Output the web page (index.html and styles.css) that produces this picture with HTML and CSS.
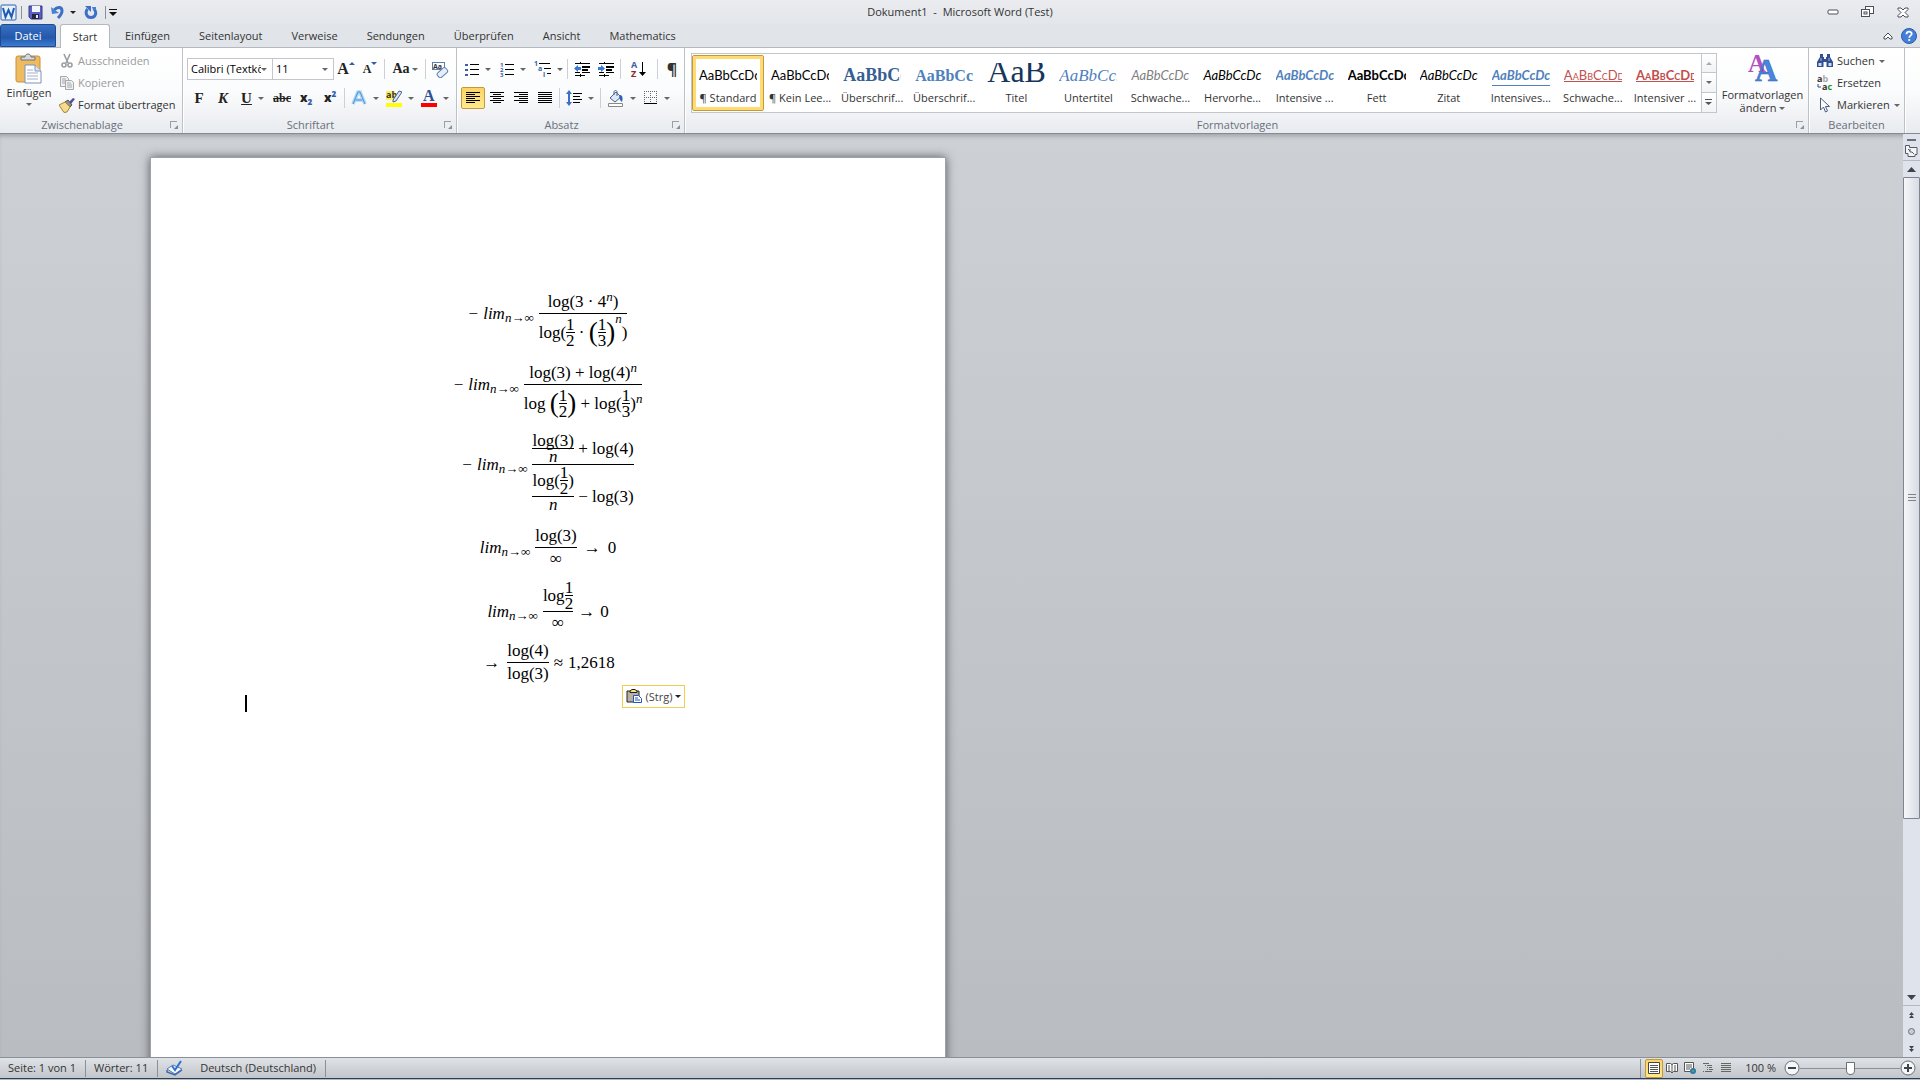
FILE: index.html
```
<!DOCTYPE html>
<html lang="de">
<head>
  <meta charset="UTF-8">
  <meta name="viewport" content="width=device-width, initial-scale=1.0">
  <title>Dokument1 - Microsoft Word (Test)</title>
  <link rel="stylesheet" href="styles.css">
</head>
<body>

  <header class="titlebar">
    <div class="quick-access">
      <svg width="17" height="17" viewBox="0 0 17 17"><rect x="1" y="1" width="15" height="15" rx="1" fill="#e8f1fb" stroke="#2b62b0"/><path d="M3 4l2.500 9L8.500 6l3 7L14 4" fill="none" stroke="#1f5bb0" stroke-width="2"/></svg>
      <span class="sep"></span>
      <button class="qat" aria-label="Speichern"><svg width="15" height="15" viewBox="0 0 15 15"><path d="M1 1h13v13H3l-2-2z" fill="#5b5fc0" stroke="#35388f"/><path d="M4 1h8v6H4z" fill="#f2f5fb"/><path d="M4 9h7v5H4z" fill="#23263f"/><path d="M8 10h2v3H8z" fill="#e8ecf8"/></svg></button>
      <button class="qat qat-undo" aria-label="Rückgängig"><svg width="14" height="15" viewBox="0 0 14 15"><path d="M3 5c4-4 8-3 8 1 0 3-2 5-4 7" fill="none" stroke="#3b6fc8" stroke-width="3"/><path d="M0 2l1 7 7-1z" fill="#4a80d4"/></svg><i class="caret dark"></i></button>
      <button class="qat" aria-label="Wiederholen"><svg width="14" height="15" viewBox="0 0 14 15"><path d="M3.500 4C1 7 2 12.500 7 12.500s6-5.500 3-8.500" fill="none" stroke="#3b6fc8" stroke-width="3"/><path d="M1 1h6v6z" fill="#3b6fc8"/><path d="M8 2h4v3H9z" fill="#4a80d4"/></svg></button>
      <span class="sep"></span>
      <button class="qat-more" aria-label="Symbolleiste anpassen"><svg width="8" height="7" viewBox="0 0 8 7"><path d="M0 0h8v1H0zM0 3h8L4 7z" fill="#111"/></svg></button>
    </div>
    <h1>Dokument1&nbsp; -&nbsp; Microsoft Word (Test)</h1>
    <div class="window-buttons">
      <button aria-label="Minimieren"><svg width="12" height="6" viewBox="0 0 12 6"><rect x="1" y="1" width="10" height="4" rx="1" fill="#fff" stroke="#4a4f5e"/></svg></button>
      <button aria-label="Verkleinern"><svg width="13" height="12" viewBox="0 0 13 12" fill="#fff" stroke="#4a4f5e"><rect x="4.500" y=".500" width="8" height="7"/><rect x=".500" y="3.500" width="8" height="7"/><rect x="3" y="6" width="3" height="2"/></svg></button>
      <button aria-label="Schließen"><svg width="12" height="11" viewBox="0 0 12 11"><path d="M1 1h3l2 2 2-2h3v1.500L8 5.500l3 3V10H8L6 8l-2 2H1V8.500l3-3-3-3z" fill="#fff" stroke="#4a4f5e"/></svg></button>
    </div>
  </header>

  <nav class="tabs">
    <button class="tab file">Datei</button>
    <button class="tab active">Start</button>
    <button class="tab">Einfügen</button>
    <button class="tab">Seitenlayout</button>
    <button class="tab">Verweise</button>
    <button class="tab">Sendungen</button>
    <button class="tab">Überprüfen</button>
    <button class="tab">Ansicht</button>
    <button class="tab">Mathematics</button>
    <div class="tab-tools">
      <button aria-label="Menüband minimieren"><svg width="10" height="8" viewBox="0 0 10 8"><path d="M5 1l4 4v2H7L5 5 3 7H1V5z" fill="#fff" stroke="#4a4f5e"/></svg></button>
      <button aria-label="Hilfe"><svg width="16" height="16" viewBox="0 0 16 16"><circle cx="8" cy="8" r="7.500" fill="#4580d8" stroke="#2b5cab"/><path d="M5.500 6.200c0-3.400 5.200-3.200 5.200-.4 0 1.800-2.500 1.900-2.500 4" fill="none" stroke="#fff" stroke-width="1.800"/><circle cx="8.200" cy="12" r="1.100" fill="#fff"/></svg></button>
    </div>
  </nav>

  <main class="ribbon">
    <section class="group clipboard">
      <div class="group-body">
        <button class="big">
          <svg width="28" height="32" viewBox="0 0 28 32"><rect x="1" y="3" width="24" height="26" rx="2" fill="#eebc5e" stroke="#c9923a"/><path d="M6 7V4h4c0-4 6-4 6 0h4v3z" fill="#d5d9de" stroke="#70757d"/><path d="M10 12h10l6 6v12H10z" fill="#fff" stroke="#7d93b8"/><path d="M20 12v6h6" fill="#dce6f4" stroke="#7d93b8"/><path d="M12 17h6M12 20h11M12 23h11M12 26h11" stroke="#9fb0cc"/></svg>
          <span>Einfügen</span><i class="caret"></i>
        </button>
        <div class="stack">
          <button class="small" disabled><svg width="16" height="16" viewBox="0 0 16 16" fill="none" stroke="#9a9da2" stroke-width="1.600"><path d="M5 1l4 9M11 1L7 10"/><circle cx="5" cy="12" r="2"/><circle cx="11" cy="12" r="2"/></svg>Ausschneiden</button>
          <button class="small" disabled><svg width="16" height="16" viewBox="0 0 16 16" fill="#f1f1f2" stroke="#a3a6ab"><path d="M1.500 1.500h6l2 2v8h-8z"/><path d="M3 4h4M3 6h4M3 8h4"/><path d="M6.500 5.500h6l2 2v7h-8z"/><path d="M8 8h4M8 10h5M8 12h5"/></svg>Kopieren</button>
          <button class="small"><svg width="16" height="16" viewBox="0 0 16 16"><path d="M10 5l4-4 2 1-4 5z" fill="#5a4a9a"/><path d="M6 5l3-2 4 5-2 2z" fill="#8b8f98" stroke="#555"/><path d="M0 8l6-3 5 5-3 5-3 .5z" fill="#f3dc8b" stroke="#a8842b"/></svg>Format übertragen</button>
        </div>
      </div>
      <footer>Zwischenablage<button class="launcher" aria-label="Zwischenablage öffnen"></button></footer>
    </section>

    <section class="group font">
      <div class="group-body rows">
        <div class="row">
          <label class="combo combo-font"><select aria-label="Schriftart"><option>Calibri (Textkörper)</option></select><i class="caret"></i></label>
          <label class="combo combo-size"><select aria-label="Schriftgrad"><option>11</option></select><i class="caret"></i></label>
          <button class="tool glyph" aria-label="Schrift vergrößern"><span class="grow">A</span><i class="tri-up"></i></button>
          <button class="tool glyph" aria-label="Schrift verkleinern"><span class="shrink">A</span><i class="tri-down"></i></button>
          <span class="sep"></span>
          <button class="split glyph case"><span>Aa</span><i class="caret"></i></button>
          <span class="sep"></span>
          <button class="tool" aria-label="Formatierung löschen"><svg width="17" height="17" viewBox="0 0 17 17"><rect x=".500" y="1.500" width="12" height="7" fill="#fff" stroke="#5d7fb0"/><text x="1" y="8" font-size="7" font-weight="bold" fill="#333">Aa</text><rect x="5" y="9" width="11" height="6" rx="2" transform="rotate(-42 10 12)" fill="#e8eef9" stroke="#5d7fb0"/></svg></button>
        </div>
        <div class="row">
          <button class="tool glyph"><b>F</b></button>
          <button class="tool glyph"><b><em>K</em></b></button>
          <button class="split glyph"><u>U</u><i class="caret"></i></button>
          <button class="tool glyph tight"><s>abc</s></button>
          <button class="tool glyph x"><b>x<sub>2</sub></b></button>
          <button class="tool glyph x"><b>x<sup>2</sup></b></button>
          <span class="sep"></span>
          <button class="split effect" aria-label="Texteffekte"><svg width="16" height="16" viewBox="0 0 16 16"><path d="M2 14L7 2h2l5 12M4.500 10h7" fill="none" stroke="#a9d4f5" stroke-width="3.500"/><path d="M2 14L7 2h2l5 12M4.500 10h7" fill="none" stroke="#4d95d2"/></svg><i class="caret"></i></button>
          <button class="split" aria-label="Texthervorhebungsfarbe"><svg width="16" height="18" viewBox="0 0 16 18"><path d="M0 2h9v9H0z" fill="#ffef5e"/><text x="0" y="9" font-size="9" font-weight="bold" fill="#333">ab</text><path d="M7 11l6-9 3 1-6 9-3 1z" fill="#dbe5f5" stroke="#46618f"/><path d="M0 14h16v4H0z" fill="#ff0"/></svg><i class="caret"></i></button>
          <button class="split" aria-label="Schriftfarbe"><svg width="16" height="18" viewBox="0 0 16 18"><text x="2" y="12" class="serif" font-size="16" font-weight="bold" fill="#2d4f94">A</text><path d="M0 14h16v4H0z" fill="#f00"/></svg><i class="caret"></i></button>
        </div>
      </div>
      <footer>Schriftart<button class="launcher" aria-label="Schriftart öffnen"></button></footer>
    </section>

    <section class="group paragraph">
      <div class="group-body rows">
        <div class="row">
          <button class="split" aria-label="Aufzählungszeichen"><svg width="14" height="13" viewBox="0 0 14 13"><path d="M0 1h3v2H0zM0 6h3v2H0zM0 11h3v2H0z" fill="#3c5fa8"/><path d="M5 1h9v1H5zM5 6h9v1H5zM5 11h9v1H5z"/></svg><i class="caret"></i></button>
          <button class="split" aria-label="Nummerierung"><svg width="14" height="15" viewBox="0 0 14 15"><g font-size="6" font-weight="bold" fill="#3c5fa8"><text x="0" y="5">1</text><text x="0" y="10">2</text><text x="0" y="15">3</text></g><path d="M5 2h9v1H5zM5 7h9v1H5zM5 12h9v1H5z"/></svg><i class="caret"></i></button>
          <button class="split" aria-label="Liste mit mehreren Ebenen"><svg width="17" height="16" viewBox="0 0 17 16"><g font-size="7" font-weight="bold" fill="#3c5fa8"><text x="0" y="5">1</text><text x="4" y="10">a</text><text x="9" y="16">i</text></g><path d="M5 2h11v1H5zM10 7h7v1h-7zM13 12h4v1h-4z"/></svg><i class="caret"></i></button>
          <span class="sep"></span>
          <button class="tool" aria-label="Einzug verkleinern"><svg width="16" height="15" viewBox="0 0 16 15"><path d="M1 1h5v1H1zM7 1h9v1H7zM8 4h8v2H8zM8 7h6v2H8zM1 10h5v1H1zM8 10h8v1H8zM1 13h5v1H1zM7 13h4v1H7zM6 0h1v2H6zM6 12h1v3H6z"/><path d="M0 6.500L4 3v2h3v3H4v2z" fill="#3d77d6"/></svg></button>
          <button class="tool" aria-label="Einzug vergrößern"><svg width="16" height="15" viewBox="0 0 16 15"><path d="M1 1h5v1H1zM7 1h9v1H7zM8 4h8v2H8zM8 7h6v2H8zM1 10h5v1H1zM8 10h8v1H8zM1 13h5v1H1zM7 13h4v1H7zM6 0h1v2H6zM6 12h1v3H6z"/><path d="M7 6.500L3 3v2H0v3h3v2z" fill="#3d77d6"/></svg></button>
          <span class="sep"></span>
          <button class="tool wide" aria-label="Sortieren"><svg width="16" height="16" viewBox="0 0 16 16"><g font-size="9" font-weight="bold"><text x="0" y="7" fill="#3c5fa8">A</text><text x="0" y="16" fill="#8b2b2b">Z</text></g><path d="M11 1h1v10h3l-3.500 4L8 11h3z"/></svg></button>
          <span class="sep"></span>
          <button class="tool pilcrow">¶</button>
        </div>
        <div class="row">
          <button class="tool on" aria-label="Linksbündig"><svg width="14" height="12" viewBox="0 0 14 12"><path d="M0 0h14v1H0zM0 2h9v1H0zM0 4h14v1H0zM0 6h9v1H0zM0 8h14v1H0zM0 10h9v1H0z"/></svg></button>
          <button class="tool" aria-label="Zentriert"><svg width="14" height="12" viewBox="0 0 14 12"><path d="M0 0h14v1H0zM3 2h8v1H3zM0 4h14v1H0zM3 6h8v1H3zM0 8h14v1H0zM3 10h8v1H3z"/></svg></button>
          <button class="tool" aria-label="Rechtsbündig"><svg width="14" height="12" viewBox="0 0 14 12"><path d="M0 0h14v1H0zM5 2h9v1H5zM0 4h14v1H0zM5 6h9v1H5zM0 8h14v1H0zM5 10h9v1H5z"/></svg></button>
          <button class="tool" aria-label="Blocksatz"><svg width="14" height="12" viewBox="0 0 14 12"><path d="M0 0h14v1H0zM0 2h14v1H0zM0 4h14v1H0zM0 6h14v1H0zM0 8h14v1H0zM0 10h14v1H0z"/></svg></button>
          <span class="sep"></span>
          <button class="split wide" aria-label="Zeilenabstand"><svg width="16" height="16" viewBox="0 0 16 16"><path d="M3 0l3 4H4v8h2l-3 4-3-4h2V4H0z" fill="#3d6fc6"/><path d="M7 3h9v1H7zM7 6h7v1H7zM7 9h9v1H7zM7 12h7v1H7z"/></svg><i class="caret"></i></button>
          <span class="sep"></span>
          <button class="split wide" aria-label="Schattierung"><svg width="17" height="17" viewBox="0 0 17 17"><path d="M3 8l6-6 5 5-6 5z" fill="#dfe8f5" stroke="#49648f"/><path d="M7 5V2c0-2 3-2 3 0v4" fill="none" stroke="#49648f"/><path d="M13 5c3 0 3 4 2 7-2-1-2-3-3-5z" fill="#2d65b5"/><path d="M1.500 13.500h14v3h-14z" fill="#fff" stroke="#888"/></svg><i class="caret"></i></button>
          <button class="split" aria-label="Rahmen"><svg width="14" height="14" viewBox="0 0 14 14"><path d="M.500 0v12M6.500 0v12M12.500 0v12M0 .500h13M0 6.500h13" stroke="#666" stroke-dasharray="1 1"/><path d="M0 12h13v1H0z"/></svg><i class="caret"></i></button>
        </div>
      </div>
      <footer>Absatz<button class="launcher" aria-label="Absatz öffnen"></button></footer>
    </section>

    <section class="group styles">
      <div class="group-body">
        <div class="gallery">
          <button class="style on"><span class="sample">AaBbCcDc</span><span class="name">¶ Standard</span></button>
          <button class="style"><span class="sample">AaBbCcDc</span><span class="name">¶ Kein Lee...</span></button>
          <button class="style"><span class="sample heading1">AaBbCc</span><span class="name">Überschrif...</span></button>
          <button class="style"><span class="sample heading2">AaBbCc</span><span class="name">Überschrif...</span></button>
          <button class="style"><span class="sample title">AaB</span><span class="name">Titel</span></button>
          <button class="style"><span class="sample subtitle">AaBbCc.</span><span class="name">Untertitel</span></button>
          <button class="style"><span class="sample faint">AaBbCcDc</span><span class="name">Schwache...</span></button>
          <button class="style"><span class="sample italic">AaBbCcDc</span><span class="name">Hervorhe...</span></button>
          <button class="style"><span class="sample intense">AaBbCcDc</span><span class="name">Intensive ...</span></button>
          <button class="style"><span class="sample strong">AaBbCcDc</span><span class="name">Fett</span></button>
          <button class="style"><span class="sample italic">AaBbCcDc</span><span class="name">Zitat</span></button>
          <button class="style"><span class="sample intense ruled">AaBbCcDc</span><span class="name">Intensives...</span></button>
          <button class="style"><span class="sample ref">AaBbCcDd</span><span class="name">Schwache...</span></button>
          <button class="style"><span class="sample ref strong">AaBbCcDd</span><span class="name">Intensiver ...</span></button>
          <div class="gallery-scroll">
            <button disabled aria-label="Nach oben"><i class="caret up"></i></button>
            <button aria-label="Nach unten"><i class="caret"></i></button>
            <button aria-label="Weitere"><svg width="7" height="6" viewBox="0 0 7 6"><path d="M0 0h7v1H0zM0 3h7L3.500 6z" fill="#555"/></svg></button>
          </div>
        </div>
        <button class="big change">
          <svg width="30" height="30" viewBox="0 0 30 30"><text x="0" y="19" class="serif" font-size="25" font-weight="bold" fill="#b44fc0">A</text><text x="7" y="28" class="serif" font-size="31" font-weight="bold" fill="#4a86dd" stroke="#2e62b0" stroke-width=".500">A</text></svg>
          <span>Formatvorlagen<br>ändern <i class="caret"></i></span>
        </button>
      </div>
      <footer>Formatvorlagen<button class="launcher" aria-label="Formatvorlagen öffnen"></button></footer>
    </section>

    <section class="group editing">
      <div class="group-body">
        <div class="stack">
          <button class="small"><svg width="16" height="16" viewBox="0 0 16 16"><path d="M3 1h3v3h1V6h2V4h1V1h3v3l3 5v5H9.500V9h-3v5H0V9l3-5z" fill="#32508f"/><path d="M1.500 10h3v3h-3zM11.500 10h3v3h-3z" fill="#c9daf4"/><path d="M4 5v3M12 5v3" stroke="#9db8e2"/></svg>Suchen <i class="caret"></i></button>
          <button class="small"><svg width="16" height="16" viewBox="0 0 16 16" font-size="9" font-weight="bold"><text x="0" y="7" fill="#333">a<tspan fill="#aaa">b</tspan></text><text x="5" y="15" fill="#333">a<tspan fill="#1b8f1b">c</tspan></text><path d="M1 9v3h3" fill="none" stroke="#2a4da0"/></svg>Ersetzen</button>
          <button class="small"><svg width="16" height="16" viewBox="0 0 16 16"><path d="M3.500 1v12l3-3 2 5 2-1-2-4.500h4z" fill="#fff" stroke="#4a5c80"/></svg>Markieren <i class="caret"></i></button>
        </div>
      </div>
      <footer>Bearbeiten</footer>
    </section>
  </main>

  <div class="workspace">
    <div class="canvas">
      <article class="page">
        <div class="equations">
          <div class="eq">
            <span>−</span><em class="lim">lim<sub>n→∞</sub></em>
            <span class="frac"><span class="num">log(3 · 4<sup>n</sup>)</span><i></i><span class="den">log(<span class="frac"><span class="num">1</span><i></i><span class="den">2</span></span> · <span class="paren">(</span><span class="frac"><span class="num">1</span><i></i><span class="den">3</span></span><span class="paren">)</span><sup class="high">n</sup>)</span></span>
          </div>
          <div class="eq">
            <span>−</span><em class="lim">lim<sub>n→∞</sub></em>
            <span class="frac"><span class="num">log(3) + log(4)<sup>n</sup></span><i></i><span class="den">log <span class="paren">(</span><span class="frac"><span class="num">1</span><i></i><span class="den">2</span></span><span class="paren">)</span> + log(<span class="frac"><span class="num">1</span><i></i><span class="den">3</span></span>)<sup>n</sup></span></span>
          </div>
          <div class="eq">
            <span>−</span><em class="lim">lim<sub>n→∞</sub></em>
            <span class="frac tall-num tall-den"><span class="num"><span class="frac"><span class="num">log(3)</span><i></i><em class="den">n</em></span> + log(4)</span><i></i><span class="den"><span class="frac"><span class="num">log(<span class="frac"><span class="num">1</span><i></i><span class="den">2</span></span>)</span><i></i><em class="den">n</em></span> − log(3)</span></span>
          </div>
          <div class="eq">
            <em class="lim">lim<sub>n→∞</sub></em>
            <span class="frac"><span class="num">log(3)</span><i></i><span class="den">∞</span></span>
            <span class="arrow">→</span><span>0</span>
          </div>
          <div class="eq">
            <em class="lim">lim<sub>n→∞</sub></em>
            <span class="frac tall-num"><span class="num">log<span class="frac"><span class="num">1</span><i></i><span class="den">2</span></span></span><i></i><span class="den">∞</span></span>
            <span>→</span><span>0</span>
          </div>
          <div class="eq">
            <span class="arrow">→</span>
            <span class="frac"><span class="num">log(4)</span><i></i><span class="den">log(3)</span></span>
            <span>≈</span><span>1,2618</span>
          </div>
        </div>
        <div class="cursor"></div>
        <button class="paste-options"><svg width="17" height="15" viewBox="0 0 17 15"><path d="M1 2h12v11H1z" fill="#b9b2a4" stroke="#222"/><path d="M4 3.500V2l2-1.500h3L11 2v1.500z" fill="#f5e27a" stroke="#222"/><path d="M7.500 6.500h5l3 3v4h-8z" fill="#fff" stroke="#1f55c0"/><path d="M9 9h3M9 11h5" stroke="#1f55c0"/></svg>(Strg)<i class="caret dark"></i></button>
      </article>
    </div>
    <aside class="scrollbar">
      <div class="splitter"></div>
      <button class="ruler" aria-label="Lineal"><svg width="13" height="12" viewBox="0 0 13 12"><path d="M.500.500h4v2h7.500v7H10v2H3v-3H.500z" fill="#f4f5f7" stroke="#555b66"/><path d="M3 4l2 2M5 4v3h2l2 2" fill="none" stroke="#555b66"/></svg></button>
      <button class="arrow-up" aria-label="Nach oben"><svg width="9" height="5" viewBox="0 0 9 5"><path d="M0 5L4.500 0 9 5z" fill="#3f434b"/></svg></button>
      <div class="track"><div class="thumb"><svg width="8" height="8" viewBox="0 0 8 8"><path d="M0 0h8v1H0zM0 3h8v1H0zM0 6h8v1H0z" fill="#7d8490"/></svg></div></div>
      <button class="arrow-down" aria-label="Nach unten"><svg width="9" height="5" viewBox="0 0 9 5"><path d="M0 0h9L4.500 5z" fill="#3f434b"/></svg></button>
      <button class="browse" aria-label="Vorherige Seite"><svg width="5" height="6" viewBox="0 0 5 6"><path d="M0 3l2.500-3L5 3zM0 6l2.500-3L5 6z" fill="#3f434b"/></svg></button>
      <button class="browse" aria-label="Browseobjekt"><svg width="7" height="7" viewBox="0 0 7 7"><circle cx="3.500" cy="3.500" r="3" fill="#c9ccd2" stroke="#6b6f77"/></svg></button>
      <button class="browse" aria-label="Nächste Seite"><svg width="5" height="6" viewBox="0 0 5 6"><path d="M0 0h5L2.500 3zM0 3h5L2.500 6z" fill="#3f434b"/></svg></button>
    </aside>
  </div>

  <footer class="statusbar">
    <button class="status">Seite: 1 von 1</button>
    <button class="status">Wörter: 11</button>
    <button class="status lang"><svg width="17" height="16" viewBox="0 0 17 16"><path d="M1 9l6-4 9 4-7 5z" fill="#f5f8fd" stroke="#5478b5"/><path d="M1 10v2l8 3 7-5" fill="none" stroke="#3d69b3" stroke-width="1.500"/><path d="M6 6l3 4 6-9" fill="none" stroke="#2f6fd0" stroke-width="2"/></svg>Deutsch (Deutschland)</button>
    <div class="views">
      <button class="view on" aria-label="Seitenlayout"><svg width="12" height="12" viewBox="0 0 12 12"><path d="M.500.500h11v11H.500z" fill="#fff" stroke="#444"/><path d="M2 3.500h8M2 5.500h8M2 7.500h8M2 9.500h8" stroke="#555"/></svg></button>
      <button class="view" aria-label="Vollbild-Lesemodus"><svg width="12" height="12" viewBox="0 0 12 12"><path d="M.500 1.500h4l1.500 1 1.500-1h4v8h-4L6 11 4.500 9.500h-4z" fill="#fff" stroke="#555"/><path d="M6 2v8M2 4h2M2 6h2M2 8h2M8 4h2M8 6h2M8 8h2" stroke="#555"/></svg></button>
      <button class="view" aria-label="Weblayout"><svg width="12" height="12" viewBox="0 0 12 12"><path d="M.500.500h9v9h-9z" fill="#fff" stroke="#555"/><path d="M2 3h6M2 5h6M2 7h4" stroke="#555"/><circle cx="9" cy="9" r="3" fill="#2f78a8"/><path d="M8 8h2v2H8z" fill="#51a36b"/></svg></button>
      <button class="view" aria-label="Gliederung"><svg width="10" height="10" viewBox="0 0 10 10"><path d="M0 .500h6M2 2.500h1M4 2.500h5M4 4.500h1M6 4.500h3M4 6.500h1M6 6.500h4M0 8.500h1M2 8.500h7" stroke="#666"/></svg></button>
      <button class="view" aria-label="Entwurf"><svg width="10" height="10" viewBox="0 0 10 10"><path d="M0 .500h10M0 2.500h10M0 4.500h10M0 6.500h10M0 8.500h10" stroke="#666"/></svg></button>
    </div>
    <button class="zoom-value">100 %</button>
    <button class="zoom-step" aria-label="Verkleinern"><svg width="16" height="16" viewBox="0 0 16 16"><circle cx="8" cy="8" r="7" fill="#f5f6f8" stroke="#6b7078"/><path d="M4 7h8v2H4z" fill="#3f434b"/></svg></button>
    <input class="zoom-slider" type="range" min="0" max="200" value="100" aria-label="Zoom">
    <button class="zoom-step" aria-label="Vergrößern"><svg width="16" height="16" viewBox="0 0 16 16"><circle cx="8" cy="8" r="7" fill="#f5f6f8" stroke="#6b7078"/><path d="M4 7h3V4h2v3h3v2H9v3H7V9H4z" fill="#3f434b"/></svg></button>
  </footer>
  <div class="taskbar"></div>

</body>
</html>
```
FILE: styles.css
```
* {
  box-sizing: border-box;
}

body {
  margin: 0;
  height: 100vh;
  display: flex;
  flex-direction: column;
  overflow: hidden;
  background: #e2e5e9;
  font-family: "Open Sans", "Noto Sans", sans-serif;
  font-size: 11px;
  line-height: 16px;
  color: #333;
}

button, select {
  margin: 0;
  padding: 0;
  border: 0;
  background: none;
  font: inherit;
  color: inherit;
}

button {
  display: flex;
  align-items: center;
  justify-content: center;
  white-space: nowrap;
}

svg {
  flex: none;
  display: block;
}

.serif {
  font-family: "Liberation Serif", serif;
}

.caret {
  flex: none;
  display: inline-block;
  border: 3px solid transparent;
  border-top-color: #666;
  border-bottom: 0;
}

.caret.dark {
  border-top-color: #222;
}

.caret.up {
  border: 3px solid transparent;
  border-bottom-color: #aaa;
  border-top: 0;
}

/* title bar */
.titlebar {
  flex: none;
  height: 24px;
  display: grid;
  grid-template-columns: 1fr auto 1fr;
  align-items: center;
  background: linear-gradient(#eaecef, #e3e6ea);
}

.titlebar h1 {
  margin: 0;
  font-size: 11px;
  font-weight: normal;
  color: #333;
}

.quick-access {
  display: flex;
  align-items: center;
}

.quick-access .sep {
  width: 1px;
  height: 13px;
  margin: 0 3px 0 4px;
  background: #8d9096;
}

.qat {
  width: 21px;
  height: 20px;
}

.qat-undo {
  width: 34px;
  gap: 5px;
}

.window-buttons {
  display: flex;
  justify-content: flex-end;
}

.window-buttons button {
  width: 35px;
  height: 20px;
}

/* tabs */
.tabs {
  flex: none;
  height: 24px;
  display: flex;
  gap: 1px;
  border-bottom: 1px solid #b4b9c0;
  background: #e1e5e9;
}

.tab {
  padding: 0 14px;
}

.tab.file {
  width: 56px;
  margin-right: 3px;
  border-radius: 3px 3px 0 0;
  border: 1px solid #1e4a91;
  background: linear-gradient(#3a70c4, #2358ab 60%, #3c7cd2);
  color: #fff;
}

.tab.active {
  width: 50px;
  padding: 0;
  margin-bottom: -1px;
  border: 1px solid #b4b9c0;
  border-bottom: 0;
  border-radius: 3px 3px 0 0;
  background: #fff;
}

.tab-tools {
  margin-left: auto;
  display: flex;
  gap: 8px;
  padding-right: 3px;
}

/* ribbon */
.ribbon {
  flex: none;
  height: 86px;
  display: flex;
  border-bottom: 1px solid #868a91;
  background: linear-gradient(#fff, #fbfcfd 50%, #e8ebef);
}

.group {
  display: flex;
  flex-direction: column;
  border-right: 1px solid #bcc1c8;
  box-shadow: 1px 0 #fff;
}

.group-body {
  flex: 1;
  display: flex;
  min-height: 0;
}

.group footer {
  position: relative;
  height: 17px;
  padding-right: 18px;
  line-height: 17px;
  text-align: center;
  color: #6a6f7b;
}

.editing footer {
  padding-right: 0;
}

.launcher {
  position: absolute;
  right: 5px;
  top: 5px;
  width: 7px;
  height: 7px;
  border: 1px solid #9a9ea6;
  border-right: 0;
  border-bottom: 0;
}

.launcher::after {
  content: "";
  border: 2px solid #8a8e96;
  border-top-color: transparent;
  border-left-color: transparent;
  margin: 4px 0 0 4px;
}

.clipboard { width: 183px; }
.font { width: 274px; }
.paragraph { width: 228px; }
.styles { flex: 1; min-width: 0; }
.editing { width: 96px; margin-right: 15px; }

.big {
  flex: none;
  flex-direction: column;
  justify-content: flex-start;
  width: 58px;
  padding-top: 5px;
}

.big .caret {
  margin-top: 2px;
}

.stack {
  padding: 2px 0 0 1px;
}

.small {
  height: 22px;
  gap: 3px;
}

.small:disabled {
  color: #9b9b9b;
}

.editing .stack {
  padding-left: 8px;
}

.editing .small {
  gap: 4px;
}

.rows {
  flex-direction: column;
  gap: 7px;
  padding: 10px 0 0 4px;
}

.row {
  display: flex;
  align-items: center;
  height: 22px;
}

.row .sep {
  width: 1px;
  height: 20px;
  margin: 0 2px;
  background: #cdd1d7;
}

.combo {
  height: 22px;
  display: flex;
  align-items: center;
  padding: 0 5px 0 3px;
  border: 1px solid #c3c7cd;
  background: #fff;
}

.combo select {
  flex: 1;
  min-width: 0;
  appearance: none;
  overflow: hidden;
  color: #000;
}

.combo-font { width: 86px; }
.combo-size { width: 61px; border-left: 0; }

.tool {
  width: 24px;
  height: 22px;
}

.tool.wide {
  width: 32px;
}

.split {
  width: 35px;
  height: 22px;
  gap: 6px;
}

.split.wide {
  width: 36px;
}

.split.case {
  width: 36px;
  gap: 2px;
  font-size: 14px;
}

.on {
  border: 1px solid #c29a3b;
  border-radius: 2px;
  background: linear-gradient(#fcd465, #ffe98a);
}

.glyph {
  font-family: "Liberation Serif", serif;
  font-size: 15px;
  font-weight: bold;
  color: #222;
}

.shrink {
  font-size: 12px;
}

.grow {
  font-size: 16px;
}

.tri-up, .tri-down {
  align-self: flex-start;
  margin-top: 4px;
  border: 3px solid transparent;
}

.tri-up {
  border-top: 0;
  border-bottom-color: #2f5cab;
}

.tri-down {
  border-bottom: 0;
  border-top-color: #2f5cab;
}

.tight {
  font-size: 12px;
}

.x {
  font-family: "Open Sans", sans-serif;
  font-size: 12px;
}

.x sub, .x sup {
  font-size: 8px;
  line-height: 8px;
  color: #2f5cab;
}

.pilcrow {
  font-size: 16px;
  font-weight: bold;
}

/* style gallery */
.styles .group-body {
  padding: 5px 0 0 6px;
}

.gallery {
  flex: 1;
  height: 60px;
  display: grid;
  grid-template-columns: repeat(14, 1fr) 15px;
  border: 1px solid #c3c7cd;
  background: #fff;
}

.style {
  min-width: 0;
  flex-direction: column;
  justify-content: flex-start;
  margin: 1px 0;
  padding: 5px 6px 0;
  border: 1px solid transparent;
}

.style.on {
  border-color: #c29a3b;
  border-radius: 2px;
  background: #fff;
  box-shadow: inset 0 0 0 3px #ffdc73;
}

.sample {
  flex: none;
  width: 100%;
  height: 28px;
  overflow: hidden;
  text-align: left;
  font: 13px/29px Lato, sans-serif;
  color: #000;
}

.name {
  line-height: 18px;
}

.sample.heading1 {
  font: bold 18px/29px "Liberation Serif", serif;
  color: #365f91;
}

.sample.heading2 {
  font: bold 16px/29px "Liberation Serif", serif;
  color: #4f81bd;
}

.sample.title {
  height: 26px;
  margin-top: 2px;
  font: 32px/17px "Liberation Serif", serif;
  color: #17365d;
}

.sample.subtitle {
  font: italic 17px/29px "Liberation Serif", serif;
  color: #4f81bd;
}

.sample.faint {
  font-style: italic;
  color: #808080;
}

.sample.italic {
  font-style: italic;
}

.sample.intense {
  font-style: italic;
  font-weight: bold;
  color: #4f81bd;
}

.sample.strong {
  font-weight: bold;
}

.sample.ruled {
  height: 25px;
  margin-bottom: 3px;
  border-bottom: 1px solid #4f81bd;
}

.sample.ref {
  font-variant: small-caps;
  text-decoration: underline;
  color: #c0504d;
}

.gallery-scroll {
  display: grid;
  grid-template-rows: repeat(3, 1fr);
}

.gallery-scroll button {
  border-left: 1px solid #c3c7cd;
  border-bottom: 1px solid #c3c7cd;
  background: linear-gradient(#fff, #f1f3f5);
}

.gallery-scroll button:last-child {
  border-bottom: 0;
}

.change {
  width: 91px;
  padding-top: 0;
  line-height: 13px;
}

.change span {
  padding-top: 5px;
}

.change .caret {
  margin: 0 0 2px;
}

/* document area */
.workspace {
  flex: 1;
  min-height: 0;
  display: flex;
  background: linear-gradient(#cdd0d5, #b9bcc0);
  box-shadow: inset 0 4px 4px -2px #9fa3a9;
}

.canvas {
  flex: 1;
  overflow: hidden;
  padding: 23px 0 0 150px;
}

.page {
  position: relative;
  width: 796px;
  height: 1123px;
  padding: 122px 94px;
  border: 1px solid #9ba3ad;
  background: #fff;
  box-shadow: 0 0 9px rgba(60, 64, 70, .8);
  color: #000;
}

.equations {
  display: grid;
  grid-template-rows: 66px 76px 84px 82px 46px 56px;
  justify-items: center;
  align-items: center;
  font: 17px/15px "Liberation Serif", serif;
}

.eq, .num, .den {
  display: flex;
  align-items: center;
  white-space: pre;
}

.eq {
  gap: 5px;
}

.frac {
  display: inline-grid;
  grid-template-rows: 1fr 1px 1fr;
  justify-items: center;
}

.frac > i {
  width: 100%;
  background: #000;
}

.num {
  align-self: end;
}

.den {
  align-self: start;
}

.eq > .frac > .num {
  padding-bottom: 4px;
}

.eq > .frac > .den {
  padding-top: 3px;
}

.eq > .tall-num > .num {
  padding-bottom: 0;
}

.eq > .tall-den > .den {
  padding-top: 0;
}

.equations sub, .equations sup {
  font-size: 13px;
  line-height: 12px;
}

.equations sup {
  font-style: italic;
  margin: -3px 0 6px;
}

.equations sup.high {
  margin: -12px 0 15px;
}

.lim {
  display: flex;
  padding-top: 4px;
}

.lim sub {
  margin-top: 6px;
}

.paren {
  font-size: 27px;
}

.arrow {
  padding: 0 2px;
}

.cursor {
  width: 2px;
  height: 17px;
  margin-top: 5px;
  background: #000;
}

.paste-options {
  position: absolute;
  left: 471px;
  top: 527px;
  width: 63px;
  height: 23px;
  gap: 3px;
  border: 1px solid #f0cf4f;
  background: #fff;
  color: #444;
}

.scrollbar {
  width: 17px;
  display: flex;
  flex-direction: column;
  background: #dfe3ec;
}

.splitter {
  height: 2px;
  margin: 5px 4px 0;
  background: #6b6f77;
}

.ruler {
  height: 20px;
  border-bottom: 1px solid #b4b9c0;
}

.arrow-up, .arrow-down {
  height: 16px;
}

.track {
  flex: 1;
}

.thumb {
  height: 79%;
  display: flex;
  align-items: center;
  justify-content: center;
  border: 1px solid #7f8692;
  border-radius: 1px;
  background: linear-gradient(90deg, #f6f7f9, #d7dbe3);
}

.arrow-down {
  border-bottom: 1px solid #b4b9c0;
}

.browse {
  height: 17px;
}

/* status bar */
.statusbar {
  flex: none;
  height: 21px;
  display: flex;
  align-items: center;
  border-top: 1px solid #8b9098;
  background: linear-gradient(#dfe2e6, #c2c6cb);
  padding-right: 4px;
}

.status {
  height: 17px;
  padding: 0 9px 0 8px;
  border-right: 1px solid #8b9098;
}

.lang {
  gap: 17px;
}

.views {
  display: flex;
  margin-left: auto;
  padding-left: 4px;
  border-left: 1px solid #8b9098;
}

.view {
  width: 18px;
  height: 19px;
}

.zoom-value {
  padding: 0 8px 0 10px;
}

.zoom-slider {
  appearance: none;
  width: 100px;
  height: 16px;
  margin: 0;
  background: linear-gradient(#8b9098, #8b9098) center / 100% 1px no-repeat;
}

.zoom-slider::-webkit-slider-thumb {
  appearance: none;
  width: 9px;
  height: 13px;
  border: 1px solid #6b7078;
  border-radius: 1px 1px 5px 5px;
  background: #fff;
}

.taskbar {
  flex: none;
  height: 2px;
  border-top: 1px solid #333c48;
  background: #a9bccf;
}
```
